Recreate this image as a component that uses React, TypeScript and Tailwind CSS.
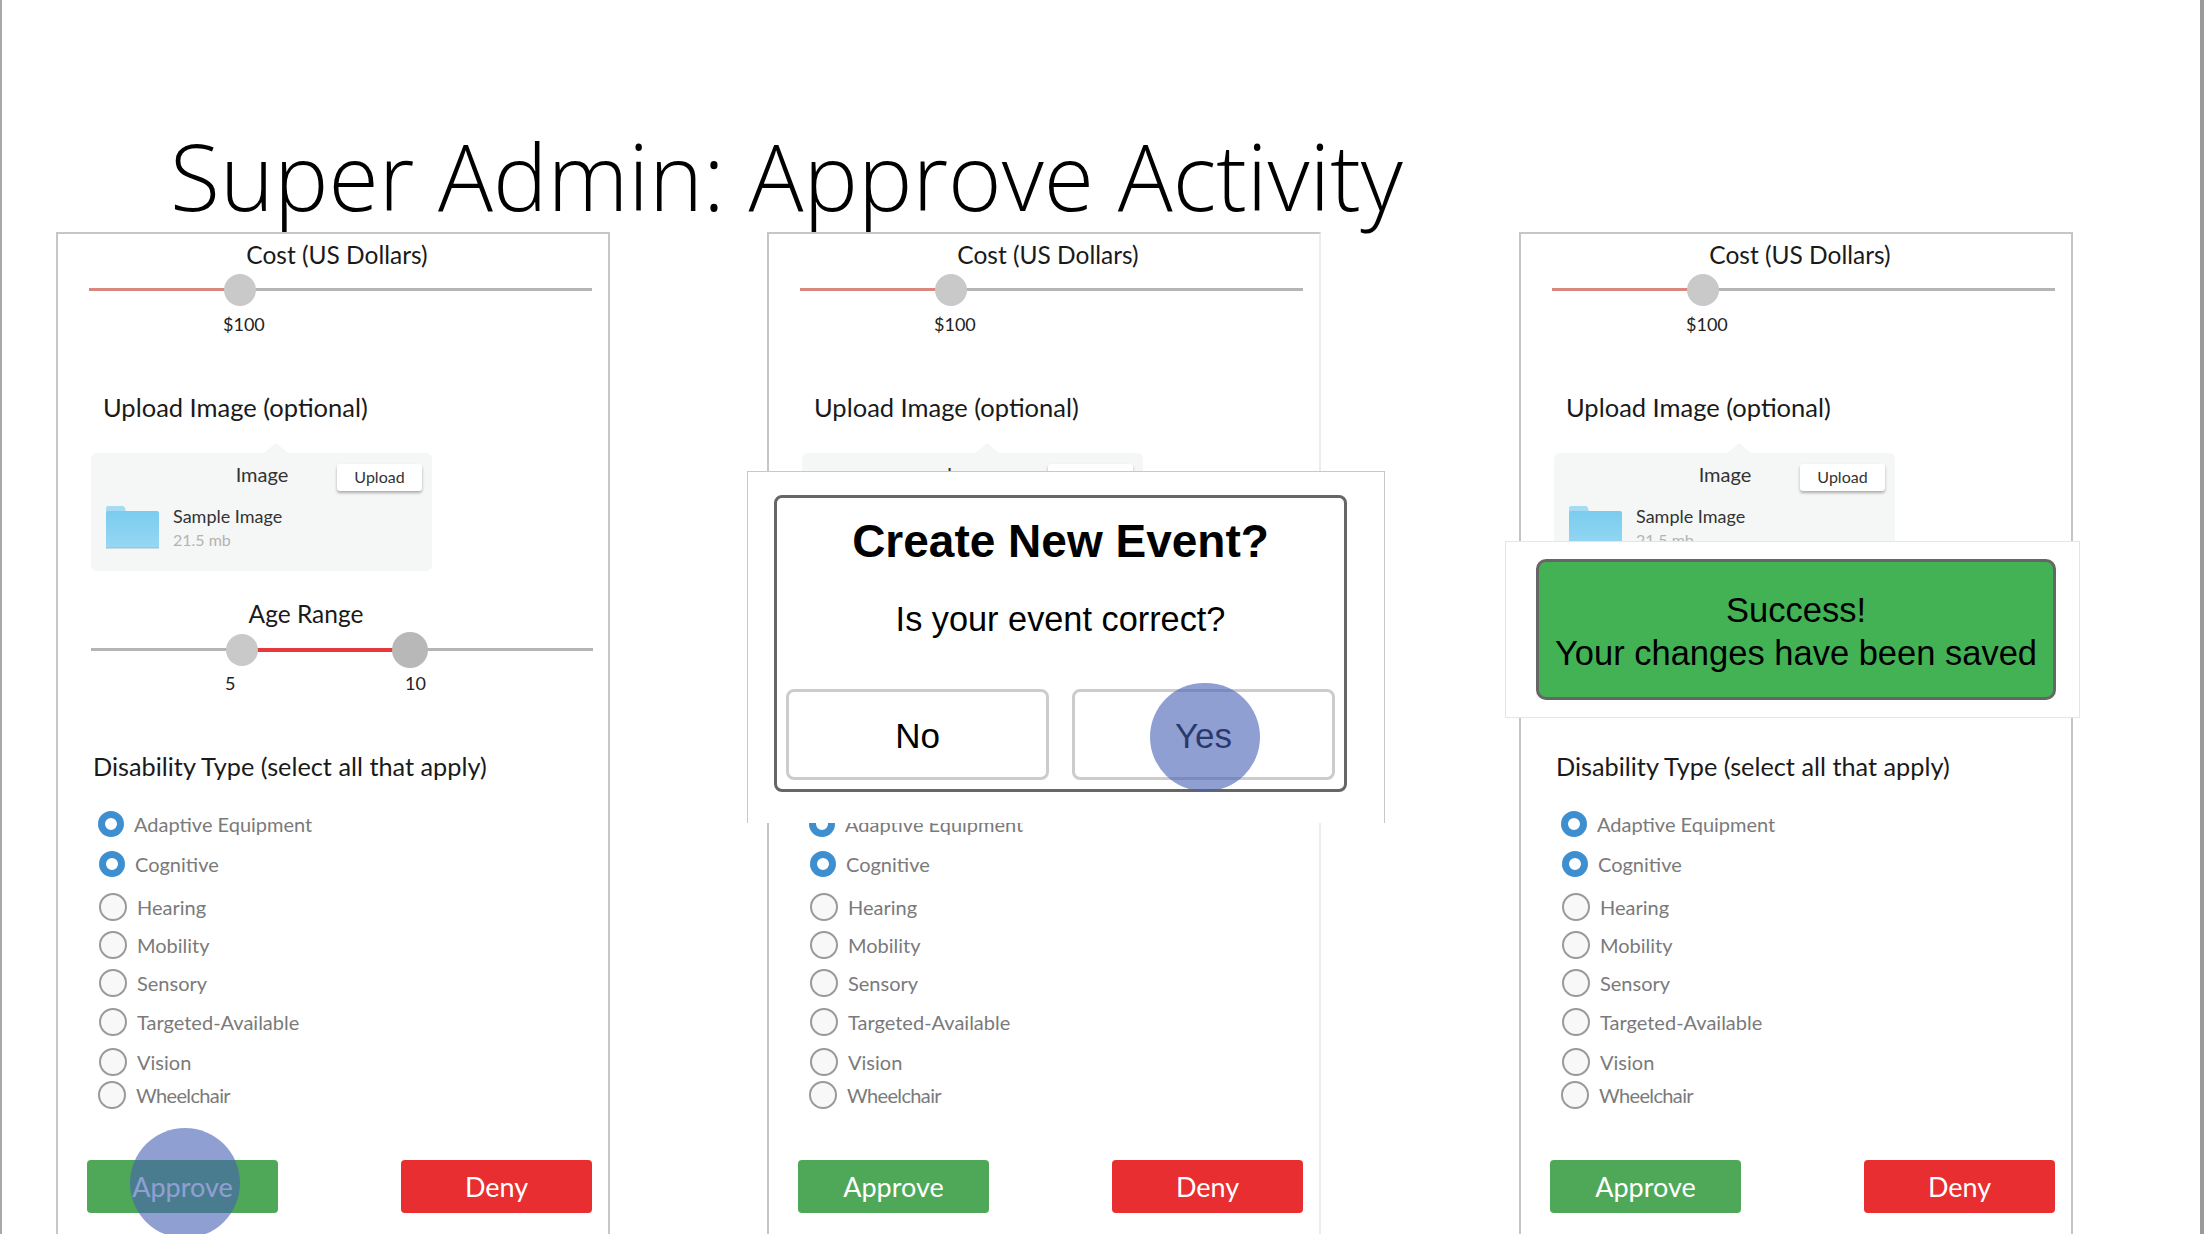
const options = [
  { label: 'Adaptive Equipment', on: true, row: 'mt-[25px] ml-[40px]' },
  { label: 'Cognitive', on: true, row: 'mt-[10px] ml-[41px]' },
  { label: 'Hearing', on: false, row: 'mt-[13px] ml-[41px]' },
  { label: 'Mobility', on: false, row: 'mt-[8px] ml-[41px]' },
  { label: 'Sensory', on: false, row: 'mt-[8px] ml-[41px]' },
  { label: 'Targeted-Available', on: false, row: 'mt-[9px] ml-[41px]' },
  { label: 'Vision', on: false, row: 'mt-[10px] ml-[41px]' },
  { label: 'Wheelchair', on: false, row: 'mt-[3px] ml-[40px] tracking-[-0.04em]' },
];

function Thumb({ className }: { className: string }) {
  return <div className={`absolute rounded-full ${className}`} />;
}

function FolderIcon() {
  return (
    <svg width="54" height="43" viewBox="0 0 54 43" className="shrink-0">
      <defs>
        <linearGradient id="folder" x1="0" y1="0" x2="0" y2="1">
          <stop offset="0" stopColor="#7accee" />
          <stop offset="1" stopColor="#97d7f3" />
        </linearGradient>
      </defs>
      <path d="M0 2a2 2 0 0 1 2-2h14a3 3 0 0 1 3 2l1 4h-20z" fill="#a5dcf4" />
      <rect x="0" y="5" width="53" height="37" rx="2" fill="url(#folder)" />
      <rect x="0" y="41" width="53" height="1.5" fill="#9cc6d8" />
    </svg>
  );
}

function Radio({ on }: { on: boolean }) {
  if (on) {
    return <span className="h-[26px] w-[26px] shrink-0 rounded-full border-[7px] border-[#3d8fd0] bg-white" />;
  }
  return <span className="h-[28px] w-[28px] shrink-0 rounded-full border-2 border-[#9a9a9a] bg-[#f7f8f7]" />;
}

function Card({ children, rightBorder }: { children?: React.ReactNode; rightBorder: string }) {
  return (
    <div className={`relative h-[1010px] w-[554px] shrink-0 border-x-2 border-t-2 border-l-[#c6c6c6] border-t-[#c6c6c6] ${rightBorder} bg-white font-['Lato',sans-serif]`}>
      <div className="ml-[8px] h-[40px] pt-[4px] text-center text-[24.5px] leading-[34px] text-[#1a1a1a]">Cost (US Dollars)</div>

      <div className="relative ml-[31px] h-[32px] w-[503px]">
        <div className="absolute left-0 right-0 top-[14px] h-[3px] bg-[#b5b5b5]" />
        <div className="absolute left-0 top-[14px] h-[3px] w-[140px] bg-[#d9877c]" />
        <Thumb className="left-[135px] top-0 h-[32px] w-[32px] bg-[#c9c9c9]" />
      </div>

      <div className="ml-[165px] mt-[7px] h-[24px] w-[40px] text-center text-[18px] leading-[23px] text-[#222]">$100</div>

      <div className="ml-[45px] mt-[53px] h-[34px] text-[25.5px] leading-[34px] text-[#1a1a1a]">Upload Image (optional)</div>

      <div className="relative ml-[33px] mt-[29px] h-[118px] w-[341px] rounded-[6px] bg-[#f5f6f6]">
        <div className="absolute left-[173px] top-[-10px] h-0 w-0 border-x-[12px] border-b-[10px] border-x-transparent border-b-[#f5f6f6]" />
        <div className="flex h-[49px] items-start pl-[142px] pt-[9px]">
          <span className="w-[58px] text-center text-[20px] leading-[24px] text-[#333]">Image</span>
          <span className="ml-[46px] mt-[2px] h-[27px] w-[85px] rounded-[3px] bg-white text-center text-[16px] leading-[26px] text-[#333] shadow-[0_2px_3px_rgba(0,0,0,0.3)]">Upload</span>
        </div>
        <div className="flex items-start gap-[13px] pl-[15px] pt-[4px]">
          <FolderIcon />
          <div className="-mt-[2px]">
            <div className="text-[18px] leading-[24px] text-[#333]">Sample Image</div>
            <div className="text-[16px] leading-[24px] text-[#b3b3b3]">21.5 mb</div>
          </div>
        </div>
      </div>

      <div className="ml-[16px] mt-[26px] h-[34px] w-[464px] text-center text-[24.5px] leading-[33px] text-[#1a1a1a]">Age Range</div>

      <div className="relative ml-[33px] h-[36px] w-[502px]">
        <div className="absolute left-0 right-0 top-[17px] h-[3px] bg-[#b5b5b5]" />
        <div className="absolute left-[151px] top-[17px] h-[4px] w-[168px] bg-[#e6393b]" />
        <Thumb className="left-[135px] top-[3px] h-[32px] w-[32px] bg-[#c9c9c9]" />
        <Thumb className="left-[301px] top-[1px] h-[36px] w-[36px] bg-[#b8b8b8]" />
      </div>

      <div className="relative ml-[33px] mt-[5px] h-[22px] w-[502px] text-[18px] leading-[22px] text-[#222]">
        <span className="absolute left-[134px]">5</span>
        <span className="absolute left-[314px]">10</span>
      </div>

      <div className="ml-[35px] mt-[54px] h-[36px] text-[25.3px] leading-[36px] text-[#1a1a1a]">Disability Type (select all that apply)</div>

      {options.map((o) => (
        <div key={o.label} className={`flex h-[30px] items-center gap-[10px] ${o.row}`}>
          <Radio on={o.on} />
          <span className="text-[20px] leading-[30px] text-[#7a7a7a]">{o.label}</span>
        </div>
      ))}

      <div className="ml-[29px] mt-[50px] flex w-[505px] justify-between">
        <button className="h-[53px] w-[191px] rounded-[4px] bg-[#4fa858] pt-[2px] text-[27px] text-white">Approve</button>
        <button className="h-[53px] w-[191px] rounded-[4px] bg-[#e82e30] pt-[2px] text-[27px] text-white">Deny</button>
      </div>

      {children}
    </div>
  );
}

export default function App() {
  return (
    <div className="h-[1234px] w-[2204px] overflow-hidden border-l-2 border-r-4 border-l-[#a8a8a8] border-r-[#9a9a9a] bg-white">
      <h1 className="ml-[168px] h-[232px] pt-[117px] font-['Open_Sans',sans-serif] text-[91.5px] font-light leading-[118px] text-black">
        Super Admin: Approve Activity
      </h1>
      <div className="flex pl-[54px]">
        <Card rightBorder="border-r-[#c6c6c6]">
          <div className="absolute left-[72px] top-[894px] h-[110px] w-[110px] rounded-full bg-[#465fb4]/60" />
        </Card>
        <div className="ml-[157px]">
          <Card rightBorder="border-r-[#ececec]">
            <div className="absolute left-[-22px] top-[237px] h-[352px] w-[638px] border border-b-0 border-[#c8c8c8] bg-white font-['Liberation_Sans',sans-serif]">
              <div className="ml-[26px] mt-[23px] h-[297px] w-[573px] rounded-[8px] border-[3px] border-[#666] bg-white">
                <div className="pt-[18px] text-center text-[46px] font-bold leading-[50px] text-black">Create New Event?</div>
                <div className="mt-[31px] text-center text-[34.3px] leading-[44px] text-black">Is your event correct?</div>
                <div className="mt-[48px] flex justify-between px-[9px]">
                  <button className="h-[91px] w-[263px] rounded-[8px] border-[3px] border-[#ccc] pt-[3px] text-[35px] text-black">No</button>
                  <button className="h-[91px] w-[263px] rounded-[8px] border-[3px] border-[#ccc] pt-[3px] text-[35px] text-black">Yes</button>
                </div>
              </div>
              <div className="absolute left-[402px] top-[211px] h-[108px] w-[110px] rounded-full bg-[#465fb4]/60" />
            </div>
          </Card>
        </div>
        <div className="ml-[198px]">
          <Card rightBorder="border-r-[#c6c6c6]">
            <div className="absolute left-[-16px] top-[307px] h-[177px] w-[575px] border border-[#e5e5e5] bg-white pl-[30px] pt-[17px] font-['Liberation_Sans',sans-serif]">
              <div className="flex h-[141px] w-[520px] flex-col items-center justify-center rounded-[10px] border-[3px] border-[#666] bg-[#43b254] pt-[5px] text-[34.5px] leading-[43px] text-black">
                <div>Success!</div>
                <div>Your changes have been saved</div>
              </div>
            </div>
          </Card>
        </div>
      </div>
    </div>
  );
}
